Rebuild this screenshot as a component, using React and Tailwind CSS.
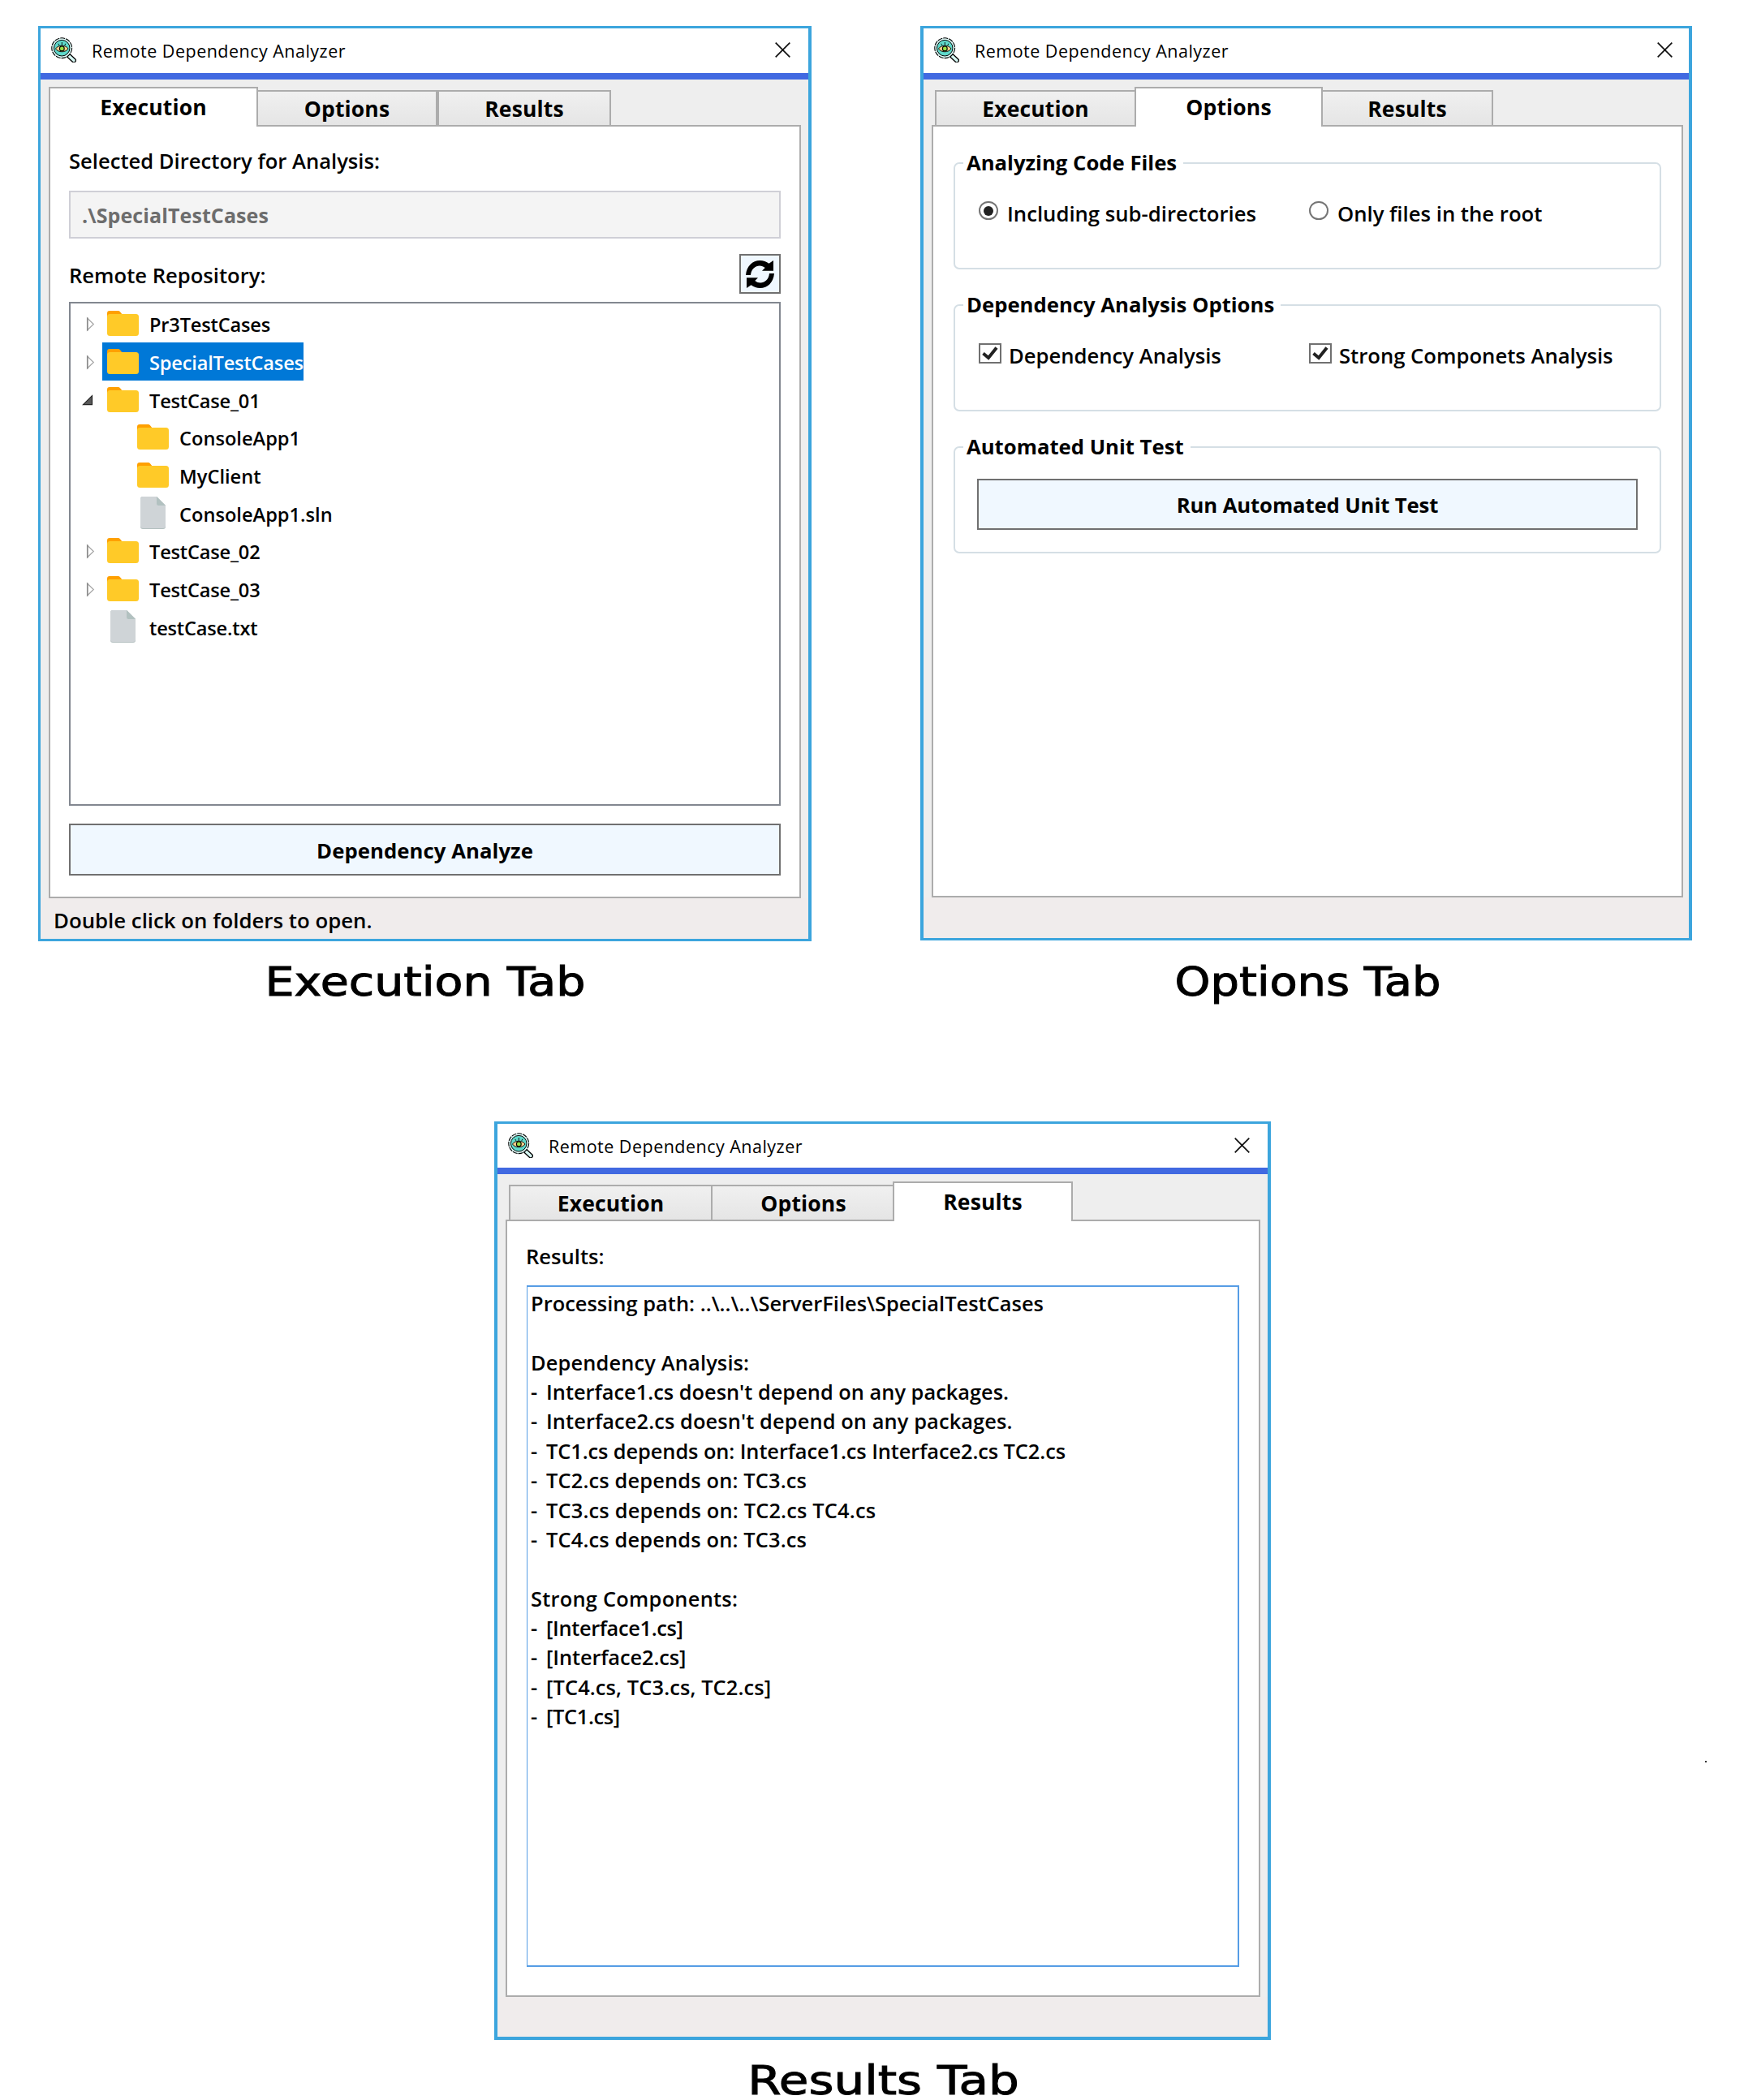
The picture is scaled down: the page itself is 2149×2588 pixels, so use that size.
import { clsx } from "clsx";

const FONT = "font-['Open_Sans','Noto_Sans',sans-serif] text-black";
const LABEL = "text-[25.6px] leading-[38px] font-semibold whitespace-pre";
const BOLD = "text-[25.7px] leading-[34px] font-bold whitespace-pre";

function AppIcon() {
  return (
    <svg viewBox="0 0 31 31" className="size-[31px] shrink-0">
      <path d="M20.5 21.5l7.500 7" stroke="#000" strokeWidth="6" strokeLinecap="round" />
      <path d="M21 22l7 6.500" stroke="#d5f6f2" strokeWidth="3.400" strokeLinecap="round" />
      <circle cx="13.200" cy="13.200" r="12.400" fill="#dcf8f5" stroke="#000" strokeWidth="1.100" strokeDasharray="6 1" />
      <circle cx="13.200" cy="13.200" r="9.800" fill="#5fd9cb" stroke="#000" strokeWidth="1" />
      <path d="M5.500 14c3-5 12.500-5 15.500 0-3 5-12.500 5-15.500 0z" fill="#fcd08c" stroke="#000" strokeWidth="0.900" />
      <circle cx="13.300" cy="13.900" r="2.900" fill="#96e043" stroke="#000" strokeWidth="1.100" />
      <path d="M13.300 6v4M8.800 7.800l1 2M17.800 7.800l-1 2" stroke="#000" strokeWidth="0.900" />
    </svg>
  );
}

function CloseIcon() {
  return (
    <svg viewBox="0 0 19 19" className="size-[19px] shrink-0">
      <path d="M0.700 0.700l17.600 17.600M18.300 0.700L0.700 18.300" stroke="#111" strokeWidth="1.700" />
    </svg>
  );
}

function RefreshIcon() {
  const arrow = "M0 18C1 7 8 0 17.500 0C21.500 0 25.500 1.400 28.500 3.700L34 0V12.800H20L23.700 9C17.500 3.600 7 7 6 18Z";
  return (
    <svg viewBox="0 0 35 34" className="h-[34px] w-[35px]">
      <path d={arrow} />
      <path d={arrow} transform="rotate(180 17.500 17)" />
    </svg>
  );
}

function FolderIcon() {
  return (
    <svg viewBox="0 0 39 31" className="h-[31px] w-[39px] shrink-0">
      <path d="M0 14V3a3 3 0 0 1 3-3h10.500a3 3 0 0 1 2.300 1L19 5v9z" fill="#ffa000" />
      <rect y="4" width="39" height="27" rx="3.500" fill="#ffca28" />
    </svg>
  );
}

function FileIcon() {
  return (
    <svg viewBox="0 0 31 40" className="mx-1 h-[40px] w-[31px] shrink-0">
      <path d="M3 0h17l11 11v26a3 3 0 0 1-3 3H3a3 3 0 0 1-3-3V3a3 3 0 0 1 3-3z" fill="#b4c0c0" />
      <path d="M3 0h17l11 11v25a3 3 0 0 1-3 3H3a3 3 0 0 1-3-3V3a3 3 0 0 1 3-3z" fill="#cfd4d7" />
      <path d="M20 0l11 11h-8.500a2.500 2.500 0 0 1-2.500-2.500z" fill="#b2c1c0" />
    </svg>
  );
}

function Expander({ state }) {
  return (
    <span className="flex h-full w-[39px] shrink-0 pl-[15px]">
      {state === "closed" && (
        <svg viewBox="0 0 9 17" className="mt-[16px] ml-[5px] h-[17px] w-[9px] overflow-visible">
          <path d="M0.500 1v15L8.300 8.500z" fill="#fff" stroke="#a6a6a6" strokeWidth="1.200" />
          <path d="M0.800 0.500v16" stroke="#8a8a8a" strokeWidth="1.600" />
        </svg>
      )}
      {state === "open" && (
        <svg viewBox="0 0 12 12" className="mt-[18px] size-[12px] overflow-visible">
          <path d="M0.500 11.700h11V0.700z" fill="#595959" stroke="#262626" strokeWidth="1.200" />
        </svg>
      )}
    </span>
  );
}

const tree = [
  { name: "Pr3TestCases", state: "closed" },
  { name: "SpecialTestCases", state: "closed", selected: true },
  { name: "TestCase_01", state: "open" },
  { name: "ConsoleApp1", child: true },
  { name: "MyClient", child: true },
  { name: "ConsoleApp1.sln", child: true, file: true },
  { name: "TestCase_02", state: "closed" },
  { name: "TestCase_03", state: "closed" },
  { name: "testCase.txt", file: true },
];

function TreeRow({ name, state, selected, child, file }) {
  return (
    <div className={clsx("flex h-[46.7px]", child && "pl-[37px]")}>
      <Expander state={state} />
      <div className={clsx("flex items-center pl-[6px]", selected && "bg-[#0078d7] text-white")}>
        {file ? <FileIcon /> : <FolderIcon />}
        <span
          className={clsx(
            "ml-[13px] pt-[3px] text-[23.6px] leading-[36px] font-semibold whitespace-nowrap",
            child ? "tracking-[0.02px]" : "tracking-[-0.18px]"
          )}
        >
          {name}
        </span>
      </div>
    </div>
  );
}

function Tab({ children, selected, className }) {
  return (
    <div
      className={clsx(
        "flex justify-center border-[#acacac] text-[26.5px] leading-[36px] font-bold tracking-[0.15px]",
        selected
          ? "h-[49px] border-x-2 border-t-2 bg-white pt-[5px]"
          : "h-[45px] border-y-2 bg-linear-to-b from-[#f0f0f0] to-[#e5e5e5] pt-[3px]",
        className
      )}
    >
      {children}
    </div>
  );
}

function Window({ className, titleClass, closeClass, stripClass, panelClass, tabs, children, status, statusClass }) {
  return (
    <section className={clsx("flex flex-col border-[#3ca5dd] bg-[#eeeeee]", className)}>
      <header className={clsx("flex items-center bg-white pl-[13px]", titleClass)}>
        <div className="pb-[2px]">
          <AppIcon />
        </div>
        <span className="ml-[19px] flex-1 pt-[1px] text-[21.5px] leading-[36px] tracking-[0.48px]">
          Remote Dependency Analyzer
        </span>
        <div className={clsx("pb-[2px]", closeClass)}>
          <CloseIcon />
        </div>
      </header>
      <div className="h-2 shrink-0 bg-[#4169e1]" />
      <nav className={clsx("relative z-10 -mb-[2px] flex h-[58px] shrink-0 items-end", stripClass)}>{tabs}</nav>
      <div className={clsx("flex flex-1 flex-col border-2 border-[#acacac] bg-white", panelClass)}>{children}</div>
      <footer className={clsx("shrink-0 bg-[#f0ecec] pt-[9px] pl-[16px]", statusClass)}>
        <span className="text-[25.8px] leading-[36px] font-semibold">{status}</span>
      </footer>
    </section>
  );
}

function Caption({ children, className }) {
  return (
    <h2
      className={clsx(
        "mt-[31px] text-center font-['DejaVu_Sans',sans-serif] text-[49px] leading-[40px] whitespace-nowrap [-webkit-text-stroke:1px_black]",
        className
      )}
    >
      {children}
    </h2>
  );
}

function Group({ title, children }) {
  return (
    <div className="relative h-[132px] rounded-[7px] border-2 border-[#d5dfe5]">
      <span className={clsx("absolute -top-[18px] left-[10px] bg-white pr-[8px] pl-[4px]", BOLD)}>{title}</span>
      {children}
    </div>
  );
}

function Radio({ checked, children }) {
  return (
    <div className="flex w-[407px] gap-[11px]">
      <span className="mt-[2px] flex h-[23px] w-[24px] items-center justify-center rounded-full border-2 border-[#757575]">
        {checked && <span className="size-[12px] rounded-full bg-[#212121]" />}
      </span>
      <span className="text-[25.7px] leading-[36px] font-semibold whitespace-nowrap">{children}</span>
    </div>
  );
}

function Checkbox({ children }) {
  return (
    <div className="flex w-[407px] gap-[9px]">
      <span className="mt-[2px] flex h-[25px] w-[28px] items-center justify-center border-2 border-[#707070]">
        <svg viewBox="0 0 20 17" className="h-[17px] w-[20px]">
          <path d="M1.500 8.500l6.500 5.500L18 1.500" fill="none" stroke="#212121" strokeWidth="4" />
        </svg>
      </span>
      <span className="text-[25.65px] leading-[36px] font-semibold whitespace-nowrap">{children}</span>
    </div>
  );
}

function Button({ children, className }) {
  return (
    <button
      className={clsx("flex items-center justify-center border-2 border-[#707070] bg-[#f0f8ff]", BOLD, className)}
    >
      {children}
    </button>
  );
}

const output = [
  { text: "Processing path: ..\\..\\..\\ServerFiles\\SpecialTestCases", tracking: "tracking-[0.03px]" },
  { text: "" },
  { text: "Dependency Analysis:", tracking: "tracking-[0.15px]" },
  { item: true, text: "Interface1.cs doesn't depend on any packages." },
  { item: true, text: "Interface2.cs doesn't depend on any packages.", tracking: "tracking-[0.1px]" },
  { item: true, text: "TC1.cs depends on: Interface1.cs Interface2.cs TC2.cs", tracking: "tracking-[-0.09px]" },
  { item: true, text: "TC2.cs depends on: TC3.cs", tracking: "tracking-[0.15px]" },
  { item: true, text: "TC3.cs depends on: TC2.cs TC4.cs", tracking: "tracking-[0.17px]" },
  { item: true, text: "TC4.cs depends on: TC3.cs", tracking: "tracking-[0.15px]" },
  { text: "" },
  { text: "Strong Components:", tracking: "tracking-[0.25px]" },
  { item: true, text: "[Interface1.cs]", tracking: "tracking-[-0.35px]" },
  { item: true, text: "[Interface2.cs]", tracking: "tracking-[-0.1px]" },
  { item: true, text: "[TC4.cs, TC3.cs, TC2.cs]", tracking: "tracking-[0.12px]" },
  { item: true, text: "[TC1.cs]", tracking: "tracking-[-0.35px]" },
];

export default function App() {
  return (
    <main className={clsx("relative h-[2588px] w-[2149px] overflow-hidden bg-white pt-8", FONT)}>
      <div className="flex pl-[47px]">
        <div className="w-[953px]">
          <Window
            className="h-[1128px] border-y-3 border-r-4 border-l-3"
            titleClass="h-[55px]"
            closeClass="mr-[22px]"
            stripClass="pl-[10px]"
            panelClass="mr-[9px] ml-[10px] px-[23px] pt-[24px]"
            statusClass="h-[50px]"
            status="Double click on folders to open."
            tabs={
              <>
                <Tab selected className="w-[258px]">Execution</Tab>
                <Tab className="w-[221px] border-r-2">Options</Tab>
                <Tab className="w-[214px] border-x-2">Results</Tab>
              </>
            }
          >
            <div className={LABEL}>Selected Directory for Analysis:</div>
            <div className="mt-[17px] flex h-[59px] items-center border-2 border-[#cfcfd6] bg-[#f4f4f4] pt-[2px] pl-[14px] text-[25px] font-bold tracking-[0.1px] text-[#6d6d6d]">
              {".\\SpecialTestCases"}
            </div>
            <div className="mt-[19px] flex h-[49px] items-center justify-between">
              <span className={clsx("pt-[5px]", LABEL)}>Remote Repository:</span>
              <button className="flex h-[49px] w-[51px] items-center justify-center border-2 border-[#707070] bg-[#f0f8ff]">
                <RefreshIcon />
              </button>
            </div>
            <div className="mt-[10px] h-[621px] border-2 border-[#828790] pt-[1.3px]">
              {tree.map((row) => (
                <TreeRow key={row.name} {...row} />
              ))}
            </div>
            <Button className="mt-[22px] h-[64px] pt-[4px] tracking-[0.07px]">Dependency Analyze</Button>
          </Window>
          <Caption className="translate-x-[0.5px] scale-x-[1.165]">Execution Tab</Caption>
        </div>

        <div className="ml-[134px] w-[951px]">
          <Window
            className="h-[1127px] border-x-4 border-y-3"
            titleClass="h-[55px]"
            closeClass="mr-[20px]"
            stripClass="pl-[14px]"
            panelClass="mr-[7px] ml-[10px] gap-[43px] px-[25px] pt-[44px]"
            statusClass="h-[50px]"
            tabs={
              <>
                <Tab className="w-[246px] border-l-2">Execution</Tab>
                <Tab selected className="w-[232px]">Options</Tab>
                <Tab className="w-[210px] border-r-2">Results</Tab>
              </>
            }
          >
            <Group title="Analyzing Code Files">
              <div className="flex pt-[44px] pl-[29px]">
                <Radio checked>Including sub-directories</Radio>
                <Radio>Only files in the root</Radio>
              </div>
            </Group>
            <Group title="Dependency Analysis Options">
              <div className="flex pt-[44px] pl-[29px]">
                <Checkbox>Dependency Analysis</Checkbox>
                <Checkbox>Strong Componets Analysis</Checkbox>
              </div>
            </Group>
            <Group title="Automated Unit Test">
              <div className="pt-[38px] pl-[27px]">
                <Button className="h-[63px] w-[814px] pt-[3px] tracking-[-0.1px]">Run Automated Unit Test</Button>
              </div>
            </Group>
          </Window>
          <Caption className="mt-[32px] translate-x-[2px] scale-x-[1.14]">Options Tab</Caption>
        </div>
      </div>

      <div className="mt-[151px] ml-[609px] w-[957px]">
        <Window
          className="h-[1132px] border-x-4 border-t-3 border-b-4"
          titleClass="h-[54px]"
          closeClass="mr-[22px]"
          stripClass="pl-[14px]"
          panelClass="mr-[9px] ml-[10px] px-[24px] pt-[25px]"
          statusClass="h-[49px]"
          tabs={
            <>
              <Tab className="w-[251px] border-x-2">Execution</Tab>
              <Tab className="w-[222px] pl-[2px]">Options</Tab>
              <Tab selected className="w-[222px]">Results</Tab>
            </>
          }
        >
          <div className={clsx("-ml-[1px]", LABEL)}>Results:</div>
          <div className="mt-[16px] h-[840px] border-2 border-l border-[#569de5] pt-[2px] pl-[4px] text-[25.4px] leading-[36.36px] font-semibold whitespace-pre">
            {output.map(({ item, text, tracking }, i) => (
              <div key={i} className="flex h-[36.36px]">
                {item && <span className="w-[19px]">-</span>}
                <span className={tracking}>{text}</span>
              </div>
            ))}
          </div>
        </Window>
        <Caption className="translate-x-[1px] scale-x-[1.215]">Results Tab</Caption>
      </div>

      <span className="absolute top-[2170px] left-[2101px] size-[2px] bg-[#333]" />
    </main>
  );
}
